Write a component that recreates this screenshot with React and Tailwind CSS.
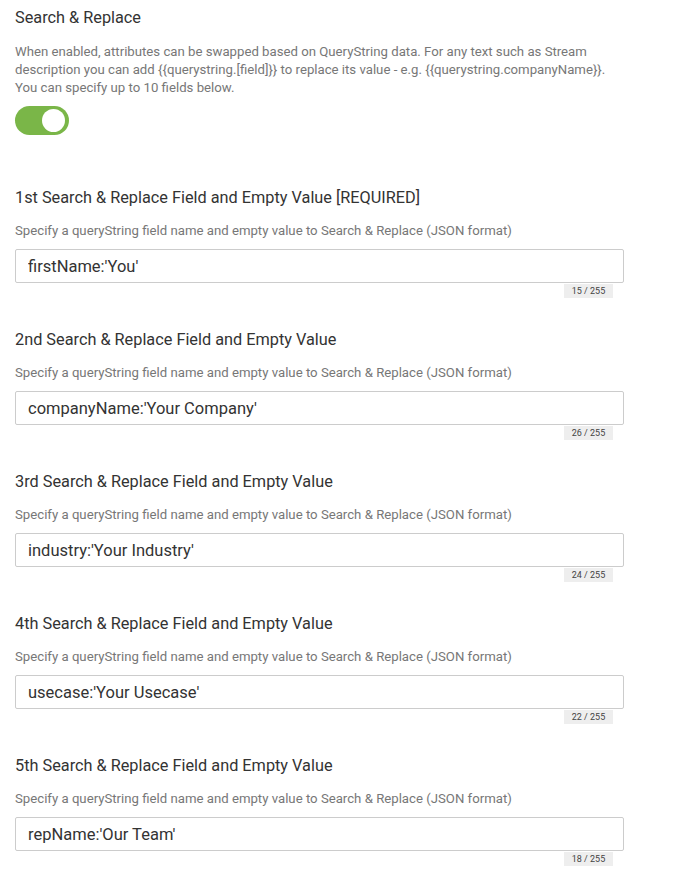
const FIELDS = [
  { title: '1st Search & Replace Field and Empty Value [REQUIRED]', value: "firstName:'You'" },
  { title: '2nd Search & Replace Field and Empty Value', value: "companyName:'Your Company'" },
  { title: '3rd Search & Replace Field and Empty Value', value: "industry:'Your Industry'" },
  { title: '4th Search & Replace Field and Empty Value', value: "usecase:'Your Usecase'" },
  { title: '5th Search & Replace Field and Empty Value', value: "repName:'Our Team'" },
]

function Field({ title, value }) {
  return (
    <div className="mb-[32px]">
      <h3 className="text-[16.3px] leading-[20px] text-[#333]">{title}</h3>
      <p className="mt-[14px] text-[13.2px] leading-[18px] text-[#777]">
        Specify a queryString field name and empty value to Search &amp; Replace (JSON format)
      </p>
      <div className="w-[609px] mt-[9px]">
        <input
          type="text"
          defaultValue={value}
          className="w-full h-[34px] px-[12px] border border-[#ccc] rounded-[2px] text-[16.5px] text-[#333] outline-none"
        />
        <div className="flex justify-end pr-[11px] mt-[1px]">
          <span className="w-[49px] h-[14px] bg-[#eee] text-[9px] leading-[14px] text-[#444] text-center">
            {value.length} / 255
          </span>
        </div>
      </div>
    </div>
  )
}

export default function App() {
  return (
    <div className="bg-white min-h-[876px] px-[15px] pt-[8px] font-['Roboto',sans-serif]">
      <h2 className="text-[16.3px] leading-[20px] text-[#333]">Search &amp; Replace</h2>
      <p className="mt-[15px] text-[13.2px] leading-[18px] text-[#777] max-w-[600px]">
        {'When enabled, attributes can be swapped based on QueryString data. For any text such as Stream description you can add {{querystring.[field]}} to replace its value - e.g. {{querystring.companyName}}. You can specify up to 10 fields below.'}
      </p>
      <div className="mt-[9px] w-[54px] h-[29px] rounded-full bg-[#7ab648] flex items-center justify-end pr-[4px]">
        <div className="w-[23px] h-[23px] rounded-full bg-white" />
      </div>
      <div className="mt-[53px]">
        {FIELDS.map(f => (
          <Field key={f.title} title={f.title} value={f.value} />
        ))}
      </div>
    </div>
  )
}
